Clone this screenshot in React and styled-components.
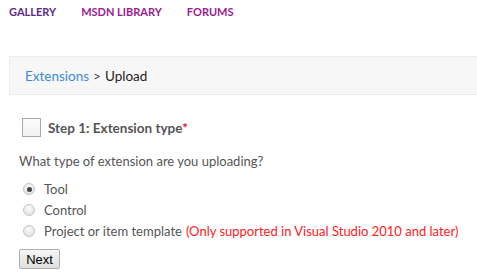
import React, { useState } from 'react';
import styled, { createGlobalStyle } from 'styled-components';

const GlobalStyle = createGlobalStyle`
  html, body {
    margin: 0;
    padding: 0;
    background: #fff;
    overflow: hidden;
  }
  body {
    font-family: Lato, "Open Sans", sans-serif;
  }
`;

const Page = styled.div`
  width: 477px;
  height: 274px;
  padding-left: 9px;
  box-sizing: border-box;
`;

const Nav = styled.nav`
  display: flex;
  gap: 25px;
  height: 56px;
  padding-top: 5px;
  box-sizing: border-box;
`;

const NavLink = styled.a`
  font-size: 11px;
  font-weight: 700;
  line-height: 14px;
  color: ${(p) => (p.$visited ? '#5b2a86' : '#9a1b93')};
  text-decoration: none;
`;

const Breadcrumb = styled.div`
  height: 37px;
  display: flex;
  align-items: center;
  padding-left: 15px;
  background: #f7f7f7;
  border: 1px solid #ececec;
  border-right: none;
  font-size: 13.5px;
  color: #222;
`;

const Crumb = styled.a`
  color: #3b8ad6;
  text-decoration: none;
`;

const Sep = styled.span`
  margin: 0 4px;
  color: #444;
`;

const Content = styled.div`
  padding-left: 10px;
  color: #555;
  font-size: 13px;
  white-space: nowrap;
`;

const StepRow = styled.div`
  display: flex;
  align-items: center;
  gap: 7px;
  margin-top: 23px;
  padding-left: 3px;
`;

const StepBox = styled.span`
  flex-shrink: 0;
  width: 17px;
  height: 17px;
  border: 1px solid #a9a9a9;
  background: linear-gradient(#fdfdfd, #f1f1f1);
  box-sizing: content-box;
`;

const StepTitle = styled.h2`
  margin: 0;
  font-size: 13.5px;
  font-weight: 700;
  color: #555;
`;

const Star = styled.span`
  color: #e81123;
`;

const Question = styled.p`
  margin: 14px 0 8px;
  line-height: 20px;
`;

const Options = styled.div`
  display: flex;
  flex-direction: column;
  gap: 1px;
`;

const Option = styled.label`
  display: flex;
  align-items: center;
  gap: 9px;
  height: 20px;
  padding-left: 4px;
  line-height: 20px;
`;

const Radio = styled.span`
  flex-shrink: 0;
  width: 12px;
  height: 12px;
  border-radius: 50%;
  border: 1px solid #c4c4c4;
  background: radial-gradient(circle at 50% 35%, #fbfbfb, #dcdcdc);
  display: flex;
  align-items: center;
  justify-content: center;
  box-sizing: border-box;
  &::after {
    content: '';
    width: 5px;
    height: 5px;
    border-radius: 50%;
    background: ${(p) => (p.$checked ? '#444' : 'transparent')};
  }
`;

const Note = styled.span`
  color: #ff2020;
  margin-left: 4px;
`;

const NextButton = styled.button`
  margin-top: 8px;
  width: 41px;
  height: 20px;
  padding: 0;
  font-family: "Liberation Sans", Arial, sans-serif;
  font-size: 13px;
  color: #000;
  border: 1px solid #adadad;
  border-radius: 2px;
  background: linear-gradient(#f6f6f6, #dedede);
`;

const options = [
  { id: 'tool', label: 'Tool' },
  { id: 'control', label: 'Control' },
  { id: 'template', label: 'Project or item template', note: '(Only supported in Visual Studio 2010 and later)' },
];

const App = () => {
  const [type, setType] = useState('tool');

  return (
    <Page>
      <GlobalStyle />
      <Nav>
        <NavLink href="#" $visited>GALLERY</NavLink>
        <NavLink href="#">MSDN LIBRARY</NavLink>
        <NavLink href="#">FORUMS</NavLink>
      </Nav>
      <Breadcrumb>
        <Crumb href="#">Extensions</Crumb>
        <Sep>&gt;</Sep>
        <span>Upload</span>
      </Breadcrumb>
      <Content>
        <StepRow>
          <StepBox />
          <StepTitle>Step 1: Extension type<Star>*</Star></StepTitle>
        </StepRow>
        <Question>What type of extension are you uploading?</Question>
        <Options>
          {options.map((o) => (
            <Option key={o.id} onClick={() => setType(o.id)}>
              <Radio $checked={type === o.id} />
              <span>
                {o.label}
                {o.note && <Note>{o.note}</Note>}
              </span>
            </Option>
          ))}
        </Options>
        <NextButton>Next</NextButton>
      </Content>
    </Page>
  );
};

export default App;
